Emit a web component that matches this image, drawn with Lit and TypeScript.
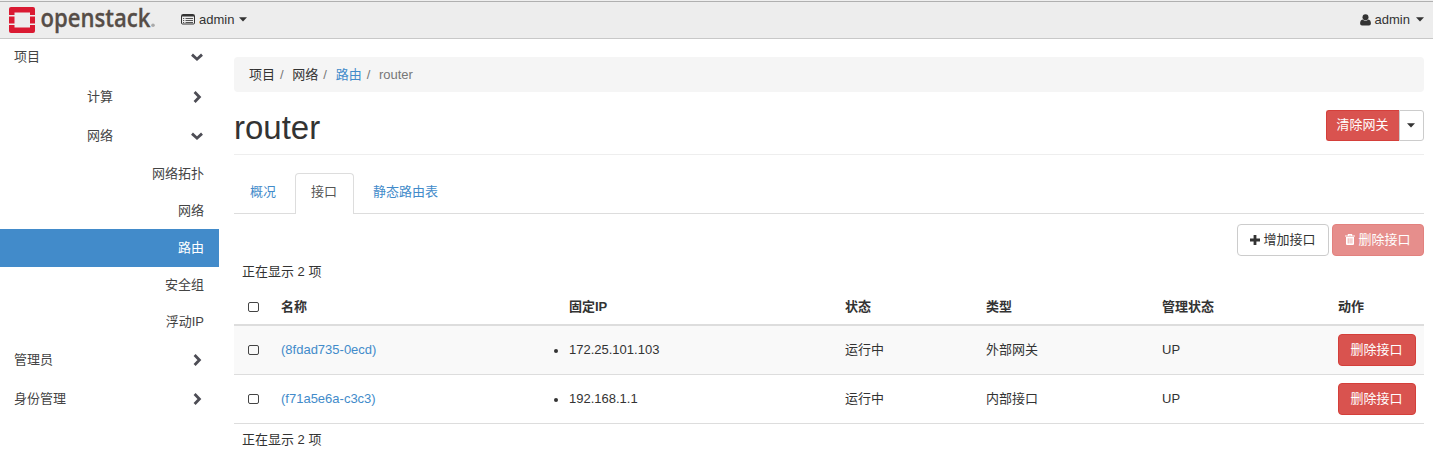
import { LitElement, html, css, svg, nothing } from "lit";
import { customElement } from "lit/decorators.js";
import { classMap } from "lit/directives/class-map.js";

interface NavItem {
  label: string;
  level: 1 | 2 | 3;
  open?: boolean;
  active?: boolean;
}

const NAV: NavItem[] = [
  { label: "项目", level: 1, open: true },
  { label: "计算", level: 2 },
  { label: "网络", level: 2, open: true },
  { label: "网络拓扑", level: 3 },
  { label: "网络", level: 3 },
  { label: "路由", level: 3, active: true },
  { label: "安全组", level: 3 },
  { label: "浮动IP", level: 3 },
  { label: "管理员", level: 1 },
  { label: "身份管理", level: 1 },
];

const ROWS = [
  { name: "(8fdad735-0ecd)", ip: "172.25.101.103", status: "运行中", type: "外部网关", admin: "UP" },
  { name: "(f71a5e6a-c3c3)", ip: "192.168.1.1", status: "运行中", type: "内部接口", admin: "UP" },
];

const chevron = (open?: boolean) => html`<svg class="chevron" width="14" height="14" viewBox="0 0 14 14">
  ${open
    ? svg`<path d="M2 4.6 L7 9.2 L12 4.6" fill="none" stroke="currentColor" stroke-width="2.8"/>`
    : svg`<path d="M4.6 2 L9.4 7 L4.6 12" fill="none" stroke="currentColor" stroke-width="2.8"/>`}
</svg>`;

const checkbox = html`<svg class="check" width="11" height="10" viewBox="0 0 11 10">
  <rect x="0.5" y="0.5" width="10" height="9" rx="1.5" fill="none" stroke="#444" />
</svg>`;

const caret = html`<svg class="caret" width="8" height="6" viewBox="0 0 8 6"><path d="M0 0.2H8L4 4.6Z" fill="currentColor" /></svg>`;

@customElement("app-root")
export class AppRoot extends LitElement {
  static styles = css`
    :host {
      display: block;
      height: 459px;
      overflow: hidden;
      background: #fff;
      color: #333;
      font: 13px/18px "Liberation Sans", "Noto Sans CJK SC", sans-serif;
    }
    * { box-sizing: border-box; }
    svg { display: block; flex: none; }
    .top {
      display: flex;
      height: 39px;
      padding: 0 9px 0 8px;
      align-items: center;
      background: linear-gradient(#efefef 1px, #b0b0b0 1px, #b0b0b0 2px, #ededed 2px);
      border-bottom: 1px solid #c8c8c8;
    }
    .logo { overflow: visible; }
    .menu { display: flex; align-items: center; height: 38px; padding-top: 1px; }
    .project { margin-left: 24px; }
    .user { margin-left: auto; }
    .menu .label { margin: 0 5px 0 4px; }
    .menu.user .label { margin-right: 6px; }
    .body { display: flex; }
    .side { width: 219px; flex: none; color: #444; }
    .nav {
      display: flex;
      align-items: center;
      justify-content: space-between;
      height: 39px;
      padding: 0 15px 0 14px;
    }
    .nav .chevron { color: #4d4d55; }
    .nav.l2 { padding-left: 87px; }
    .nav.l3 { height: 37px; justify-content: flex-end; }
    .active { background: #428bca; color: #fff; box-shadow: 0 1px #428bca; }
    .nav:first-child { height: 38px; padding-bottom: 2px; }
    .main { flex: 1; padding: 18px 9px 0 15px; }
    .crumbs {
      display: flex;
      height: 35px;
      padding: 0 15px;
      align-items: center;
      background: #f5f5f5;
      border-radius: 4px;
    }
    .sep { width: 17.3px; padding-left: 5px; color: #777; }
    .current { color: #777; }
    .link { color: #428bca; }
    .head {
      display: flex;
      justify-content: space-between;
      height: 63px;
      padding-top: 18px;
      border-bottom: 1px solid #eee;
    }
    h1 { margin: 0; font-size: 33px; line-height: 36px; font-weight: 400; }
    .split { display: flex; height: 31px; }
    .btn {
      display: flex;
      align-items: center;
      justify-content: center;
      gap: 3px;
      height: 32px;
      padding-bottom: 1px;
      border: 1px solid #ccc;
      border-radius: 4px;
      background: #fff;
      white-space: nowrap;
    }
    .danger { background: #d9534f; border-color: #d43f3a; color: #fff; }
    .clear { width: 73px; height: 31px; border-radius: 3px 0 0 3px; border-right: 0; padding-right: 1px; }
    .drop { width: 25px; height: 31px; border-radius: 0 3px 3px 0; padding: 1px 1px 0 0; }
    .tabs {
      display: flex;
      height: 59px;
      padding-top: 18px;
      border-bottom: 1px solid #ddd;
    }
    .tab {
      height: 41px;
      padding: 9px 15px 0;
      border: 1px solid transparent;
      border-bottom: 0;
      white-space: nowrap;
    }
    .tab.first { width: 61px; }
    .tab.on { width: 59px; background: #fff; color: #555; border-color: #ddd; border-radius: 4px 4px 0 0; }
    .tab.last { padding-left: 18px; }
    .actions { display: flex; justify-content: flex-end; gap: 3px; padding-top: 10px; height: 42px; }
    .wide { width: 92px; }
    .disabled { opacity: 0.65; }
    .count { height: 33px; padding: 7px 8px 0; }
    .row {
      display: grid;
      grid-template-columns: 39px 288px 276px 141px 176px 176px 94px;
      align-items: center;
      height: 49px;
      border-bottom: 1px solid #ddd;
    }
    .row > * { padding-left: 8px; }
    .row .box { padding-left: 14px; }
    .row.th { height: 37px; font-weight: 700; border-bottom: 2px solid #ddd; }
    .odd { background: #f9f9f9; }
    .ip { display: flex; align-items: center; margin-left: -15px; }
    .dot { width: 4px; height: 4px; border-radius: 2px; background: #333; margin: 1px 11px 0 0; }
    .row .del { width: 78px; margin-left: 8px; padding: 0 1px 1px 0; }
  `;

  render() {
    return html`
      <header class="top">
        <svg class="logo" width="149" height="38" viewBox="8 0 149 38">
          <path d="M11 7H33a2 2 0 0 1 2 2V15H30V12.5H14.5V15H9V9a2 2 0 0 1 2-2Z" fill="#da1a32" />
          <path d="M9 16.5H14.5V23.5H9ZM30 16.5H35V23.5H30Z" fill="#da1a32" />
          <path d="M9 25H14.5V27.5H30V25H35V31a2 2 0 0 1-2 2H11a2 2 0 0 1-2-2Z" fill="#da1a32" />
          <text x="40.5" y="27" font-family="Open Sans, sans-serif" font-size="25.5" font-weight="600" fill="#564d47" stroke="#564d47" stroke-width="0.3" textLength="110" lengthAdjust="spacingAndGlyphs">openstack</text>
          <circle cx="153" cy="25.3" r="1.8" fill="#aaa" />
        </svg>
        <div class="menu project">
          <svg width="14" height="12" viewBox="0 0 14 12">
            <path d="M1.5 0.5H12.5Q13.5 0.5 13.5 1.5V9Q13.5 10 12.5 10H1.5Q0.5 10 0.5 9V1.5Q0.5 0.5 1.5 0.5Z" fill="none" stroke="#333" />
            <path d="M1 1H13V2.5H1Z" fill="#333" />
            <path d="M2 4.5H3.2M4.5 4.5H12M2 6.5H3.2M4.5 6.5H12M2 8.5H3.2M4.5 8.5H12" stroke="#555" />
          </svg>
          <span class="label">admin</span>${caret}
        </div>
        <div class="menu user">
          <svg width="11" height="12" viewBox="0 0 11 12">
            <circle cx="5.5" cy="3.2" r="3" fill="#333" />
            <path d="M2.6 5.4Q5.5 8 8.4 5.4Q10.9 6 10.9 9.5Q10.9 11.5 9 11.5H2Q0.1 11.5 0.1 9.5Q0.1 6 2.6 5.4Z" fill="#333" />
          </svg>
          <span class="label">admin</span>${caret}
        </div>
      </header>
      <div class="body">
        <nav class="side">
          ${NAV.map(
            (n) => html`<div class=${classMap({ nav: true, l2: n.level === 2, l3: n.level === 3, active: !!n.active })}>
              <span>${n.label}</span>${n.level < 3 ? chevron(n.open) : nothing}
            </div>`
          )}
        </nav>
        <main class="main">
          <div class="crumbs">
            <span>项目</span><span class="sep">/</span><span>网络</span><span class="sep">/</span
            ><span class="link">路由</span><span class="sep">/</span><span class="current">router</span>
          </div>
          <div class="head">
            <h1>router</h1>
            <div class="split">
              <div class="btn danger clear">清除网关</div>
              <div class="btn drop">${caret}</div>
            </div>
          </div>
          <div class="tabs">
            <div class="tab first link">概况</div>
            <div class="tab on">接口</div>
            <div class="tab last link">静态路由表</div>
          </div>
          <div class="actions">
            <div class="btn wide">
              <svg width="10" height="10" viewBox="0 0 10 10"><path d="M5 0V10M0 5H10" stroke="#333" stroke-width="2.8" /></svg>
              增加接口
            </div>
            <div class="btn danger wide disabled">
              <svg width="10" height="11" viewBox="0 0 10 11">
                <path d="M0 2H10M3.4 1.8V0.6H6.6V1.8" fill="none" stroke="#fff" stroke-width="1.2" />
                <path fill-rule="evenodd" d="M1 3H9V10Q9 11 8 11H2Q1 11 1 10ZM2.8 4.3V9.5H3.5V4.3ZM4.7 4.3V9.5H5.4V4.3ZM6.6 4.3V9.5H7.3V4.3Z" fill="#fff" />
              </svg>
              删除接口
            </div>
          </div>
          <div class="count">正在显示 2 项</div>
          <div class="row th">
            <div class="box">${checkbox}</div>
            <div>名称</div><div>固定IP</div><div>状态</div><div>类型</div><div>管理状态</div><div>动作</div>
          </div>
          ${ROWS.map(
            (r, i) => html`<div class=${classMap({ row: true, odd: i % 2 === 0 })}>
              <div class="box">${checkbox}</div>
              <div class="link">${r.name}</div>
              <div class="ip"><i class="dot"></i>${r.ip}</div>
              <div>${r.status}</div>
              <div>${r.type}</div>
              <div>${r.admin}</div>
              <div class="btn danger del">删除接口</div>
            </div>`
          )}
          <div class="count">正在显示 2 项</div>
        </main>
      </div>
    `;
  }
}
